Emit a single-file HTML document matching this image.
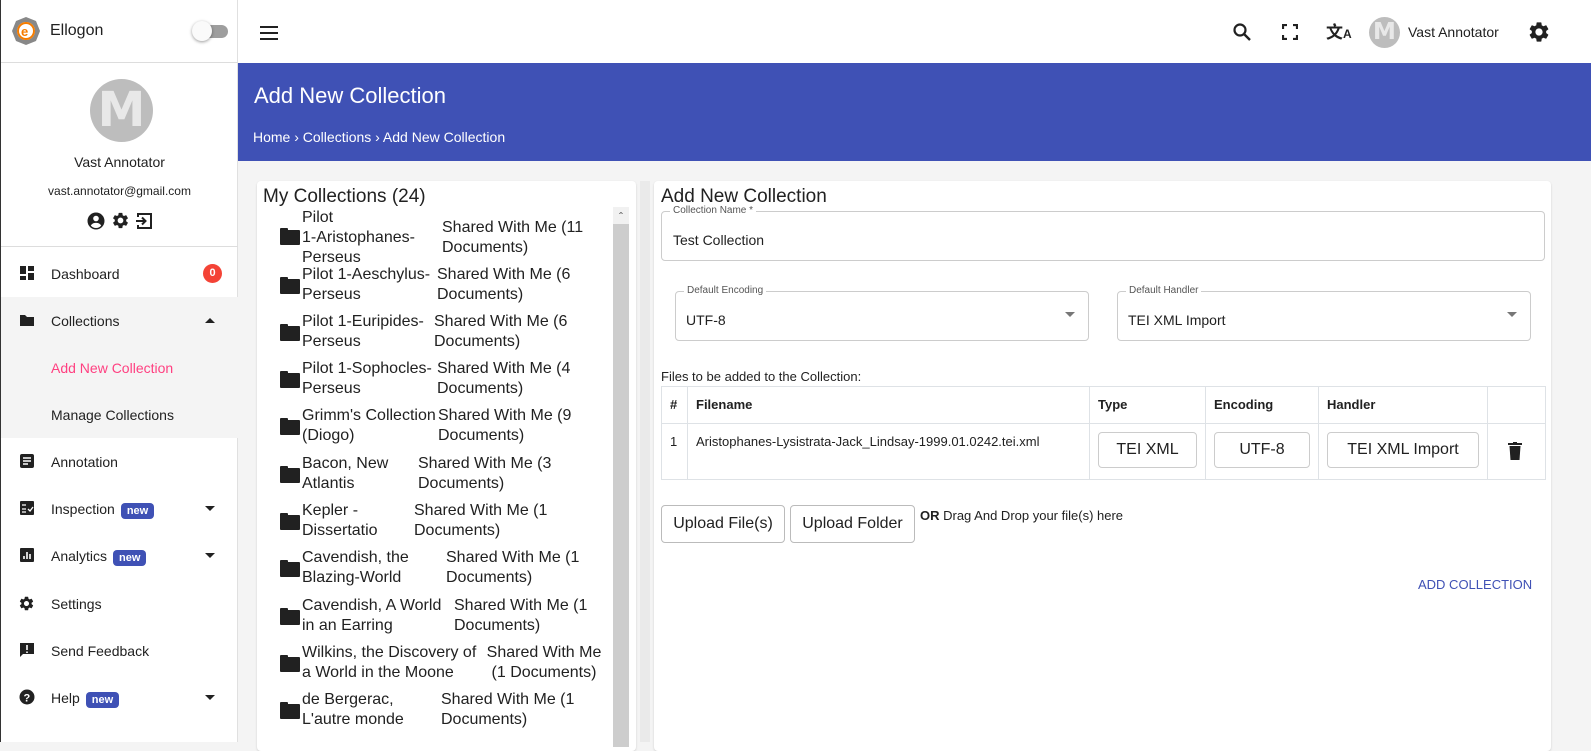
<!DOCTYPE html>
<html><head><meta charset="utf-8"><style>
*{box-sizing:border-box;margin:0;padding:0}
body{width:1591px;height:742px;overflow:hidden;background:#f4f4f4;font-family:"Liberation Sans",sans-serif;color:#212121;position:relative}
.a{position:absolute}
.side{left:0;top:0;width:238px;height:742px;background:#fff;border-right:1px solid #e0e0e0;border-left:1px solid #333}
.nav{position:absolute;left:0;width:237px;height:47px;font-size:14px;display:flex;align-items:center}
.nav .ic{position:absolute;left:18px;top:15px;width:16px;height:16px}
.nav .t{position:absolute;left:50px}
.badge{background:#3f51b5;color:#fff;font-size:11px;font-weight:bold;border-radius:4px;padding:2px 6px;margin-left:6px}
.caret{position:absolute;left:204px;width:0;height:0;border-left:5px solid transparent;border-right:5px solid transparent;border-top:5px solid #212121}
.card{background:#fff;border-radius:4px;box-shadow:0 1px 2px rgba(0,0,0,.15)}
.row{position:absolute;left:280px;font-size:16px;line-height:20px;color:#212121}
.fold{position:absolute;left:0;width:20px;height:15px;background:#212121;border-radius:1px}
.fold:before{content:"";position:absolute;left:0;top:-2px;width:8px;height:3px;background:#212121;border-radius:1px 1px 0 0}
.fs{position:absolute;border:1px solid #ccc;border-radius:4px}
.lbl{position:absolute;top:-7px;left:8px;background:#fff;font-size:10px;color:#555;padding:0 3px}
td,th{border:1px solid #dee2e6;font-size:13px;text-align:left;vertical-align:top}
.inb{border:1px solid #ccc;border-radius:4px;display:inline-block;height:36px;line-height:34px;font-size:16px;text-align:center}
.btn{position:absolute;border:1px solid #bbb;border-radius:4px;background:#fff;height:38px;line-height:36px;font-size:16px;text-align:center}
.av{border-radius:50%;background:#bdbdbd;color:#e8e8e8;font-weight:bold;text-align:center;font-family:"DejaVu Sans",sans-serif}
</style></head><body>
<svg width="0" height="0" style="position:absolute"><defs><path id="gear" d="M19.14 12.94c.04-.3.06-.61.06-.94 0-.32-.02-.64-.07-.94l2.03-1.58c.18-.14.23-.41.12-.61l-1.92-3.32c-.12-.22-.37-.29-.59-.22l-2.39.96c-.5-.38-1.030-.7-1.62-.94l-.36-2.54c-.04-.24-.24-.41-.48-.41h-3.84c-.24 0-.43.17-.47.41l-.36 2.54c-.59.24-1.13.57-1.62.94l-2.39-.96c-.22-.08-.47 0-.59.22L2.74 8.87c-.12.21-.08.47.12.61l2.03 1.58c-.05.3-.09.63-.09.94s.02.64.07.94l-2.03 1.58c-.18.14-.23.41-.12.61l1.92 3.32c.12.22.37.29.59.22l2.39-.96c.5.38 1.03.7 1.62.94l.36 2.54c.05.24.24.41.48.41h3.84c.24 0 .44-.17.47-.41l.36-2.54c.59-.24 1.13-.56 1.62-.94l2.39.96c.22.08.47 0 .59-.22l1.920-3.32c.12-.22.07-.47-.12-.61l-2.01-1.58zM12 15.6c-1.98 0-3.6-1.62-3.6-3.6s1.62-3.6 3.6-3.6 3.6 1.62 3.6 3.6-1.62 3.6-3.6 3.6z"/></defs></svg>
<!-- sidebar -->
<div class="a side">
 <svg class="a" style="left:10px;top:16px" width="30" height="30" viewBox="0 0 30 30"><polygon points="15,1 25,5 29,15 25,25 15,29 5,25 1,15 5,5" fill="#888"/><circle cx="15" cy="15" r="9" fill="#fff"/><circle cx="15" cy="15" r="8" fill="none" stroke="#f57c00" stroke-width="2"/><text x="10" y="20" font-size="13" font-weight="bold" fill="#f57c00" font-family="Liberation Sans">e</text></svg>
 <div class="a" style="left:49px;top:22px;font-size:16px">Ellogon</div>
 <div class="a" style="left:195px;top:25px;width:32px;height:13px;border-radius:7px;background:#9e9e9e"></div>
 <div class="a" style="left:191px;top:21px;width:20px;height:20px;border-radius:50%;background:#fafafa;box-shadow:0 1px 3px rgba(0,0,0,.4)"></div>
 <div class="a" style="left:0;top:62px;width:237px;height:1px;background:#ddd"></div>
 <div class="a av" style="left:89px;top:79px;width:63px;height:63px;font-size:48px;line-height:63px">M</div>
 <div class="a" style="left:0;width:237px;top:154px;text-align:center;font-size:14px">Vast Annotator</div>
 <div class="a" style="left:0;width:237px;top:184px;text-align:center;font-size:12px">vast.annotator@gmail.com</div>
 <svg class="a" style="left:86px;top:212px" width="18" height="18" viewBox="0 0 18 18"><circle cx="9" cy="9" r="8.5" fill="#212121"/><circle cx="9" cy="6.5" r="2.8" fill="#fff"/><path d="M3.8 13.5c1.5-2 3-2.6 5.2-2.6s3.7.6 5.2 2.6c-1.3 1.6-3.1 2.5-5.2 2.5s-3.9-.9-5.2-2.5z" fill="#fff"/></svg>
 <svg class="a" style="left:110px;top:211px" width="19" height="19" viewBox="0 0 24 24"><use href="#gear" fill="#212121"/></svg>
 <svg class="a" style="left:134px;top:212px" width="18" height="18" viewBox="0 0 18 18"><path d="M3 5V2h13v14H3v-3" stroke="#212121" stroke-width="2" fill="none"/><path d="M1 9h9M7 5.5L10.5 9 7 12.5" stroke="#212121" stroke-width="2" fill="none"/></svg>
 <div class="a" style="left:0;top:246px;width:237px;height:1px;background:#ddd"></div>
 <div class="nav" style="top:250px"><svg class="ic" viewBox="0 0 16 16"><rect x="1" y="1" width="6" height="8" fill="#212121"/><rect x="9" y="1" width="6" height="5" fill="#212121"/><rect x="1" y="11" width="6" height="4" fill="#212121"/><rect x="9" y="8" width="6" height="7" fill="#212121"/></svg><span class="t">Dashboard</span><span class="a" style="left:202px;top:14px;width:19px;height:19px;border-radius:50%;background:#f44336;color:#fff;font-size:11px;font-weight:bold;text-align:center;line-height:19px">0</span></div>
 <div class="a" style="left:0;top:297px;width:237px;height:141px;background:#f4f4f4"></div>
 <div class="nav" style="top:297px"><svg class="ic" viewBox="0 0 16 16"><path d="M1 3h5l2 2h7v9H1z" fill="#212121"/></svg><span class="t">Collections</span><span class="caret" style="border-top:none;border-bottom:5px solid #212121;top:21px"></span></div>
 <div class="nav" style="top:344px"><span class="t" style="color:#ff4081">Add New Collection</span></div>
 <div class="nav" style="top:391px"><span class="t">Manage Collections</span></div>
 <div class="nav" style="top:438px"><svg class="ic" viewBox="0 0 16 16"><rect x="1" y="1" width="14" height="14" rx="2" fill="#212121"/><path d="M4 5h8M4 8h8M4 11h5" stroke="#fff" stroke-width="1.5"/></svg><span class="t">Annotation</span></div>
 <div class="nav" style="top:485px"><svg class="ic" viewBox="0 0 16 16"><rect x="1" y="1" width="14" height="14" rx="1" fill="#212121"/><path d="M3 5h4M3 9h4M3 12h4M9 9l2 2 3-4" stroke="#fff" stroke-width="1.3" fill="none"/></svg><span class="t">Inspection<span class="badge">new</span></span><span class="caret" style="top:21px"></span></div>
 <div class="nav" style="top:532px"><svg class="ic" viewBox="0 0 16 16"><rect x="1" y="1" width="14" height="14" rx="1" fill="#212121"/><path d="M5 12V9M8 12V5M11 12V7" stroke="#fff" stroke-width="1.6"/></svg><span class="t">Analytics<span class="badge">new</span></span><span class="caret" style="top:21px"></span></div>
 <div class="nav" style="top:580px"><svg class="ic" viewBox="0 0 24 24" style="width:17px;height:17px;left:17px"><use href="#gear" fill="#212121"/></svg><span class="t">Settings</span></div>
 <div class="nav" style="top:627px"><svg class="ic" viewBox="0 0 16 16"><path d="M1 1h14v11H4l-3 3z" fill="#212121"/><path d="M8 3v5M8 9.5v1.5" stroke="#fff" stroke-width="1.6"/></svg><span class="t">Send Feedback</span></div>
 <div class="nav" style="top:674px"><svg class="ic" viewBox="0 0 16 16"><circle cx="8" cy="8" r="7.5" fill="#212121"/><text x="4.5" y="12.5" font-size="11" font-weight="bold" fill="#fff" font-family="Liberation Sans">?</text></svg><span class="t">Help<span class="badge">new</span></span><span class="caret" style="top:21px"></span></div>
</div>
<!-- topbar -->
<div class="a" style="left:238px;top:0;width:1353px;height:63px;background:#fff"></div>
<div class="a" style="left:260px;top:26px;width:18px;height:2px;background:#212121;box-shadow:0 6px 0 #212121,0 12px 0 #212121;top:26px"></div>
<svg class="a" style="left:1232px;top:22px" width="20" height="20" viewBox="0 0 20 20"><circle cx="8" cy="8" r="5.5" stroke="#212121" stroke-width="2.2" fill="none"/><path d="M12 12l6 6" stroke="#212121" stroke-width="2.4"/></svg>
<svg class="a" style="left:1282px;top:24px" width="16" height="16" viewBox="0 0 16 16"><path d="M1 5V1h4M11 1h4v4M15 11v4h-4M5 15H1v-4" stroke="#212121" stroke-width="2.2" fill="none"/></svg>
<div class="a" style="left:1326px;top:20px;font-size:17px;font-weight:bold;font-family:'Noto Sans CJK SC',sans-serif;line-height:22px">文<span style="font-size:12px;font-family:'Liberation Sans'">A</span></div>
<div class="a av" style="left:1369px;top:17px;width:31px;height:31px;font-size:23px;line-height:31px">M</div>
<div class="a" style="left:1408px;top:24px;font-size:14px">Vast Annotator</div>
<svg class="a" style="left:1527px;top:20px" width="24" height="24" viewBox="0 0 24 24"><use href="#gear" fill="#212121"/></svg>
<!-- header -->
<div class="a" style="left:238px;top:63px;width:1353px;height:98px;background:#3f51b5"></div>
<div class="a" style="left:254px;top:83px;font-size:22px;color:#fff">Add New Collection</div>
<div class="a" style="left:253px;top:129px;font-size:14px;color:#fff">Home &#8250; Collections &#8250; Add New Collection</div>
<!-- left card -->
<div class="a card" style="left:257px;top:181px;width:379px;height:570px"></div>
<div class="a" style="left:263px;top:186px;font-size:19px">My Collections (24)</div>
<div class="a" style="left:613px;top:207px;width:16px;height:540px;background:#cdcdcd"></div>
<div class="a" style="left:613px;top:207px;width:16px;height:17px;background:#f1f1f1;font-size:12px;text-align:center;line-height:20px;color:#555">&#710;</div>
<div class="a" style="left:640px;top:181px;width:10px;height:561px;background:#eaeaea"></div>
<div class="row" style="top:208px"><span class="fold" style="top:22px"></span><span class="a" style="left:22px;width:140px">Pilot<br>1-Aristophanes-<br>Perseus</span><span class="a" style="left:162px;top:10px;width:160px">Shared With Me (11<br>Documents)</span></div>
<div class="row" style="top:265px"><span class="fold" style="top:14px"></span><span class="a" style="left:22px;width:140px">Pilot 1-Aeschylus-<br>Perseus</span><span class="a" style="left:157px;width:160px">Shared With Me (6<br>Documents)</span></div>
<div class="row" style="top:312px"><span class="fold" style="top:14px"></span><span class="a" style="left:22px;width:140px">Pilot 1-Euripides-<br>Perseus</span><span class="a" style="left:154px;width:160px">Shared With Me (6<br>Documents)</span></div>
<div class="row" style="top:359px"><span class="fold" style="top:14px"></span><span class="a" style="left:22px;width:140px">Pilot 1-Sophocles-<br>Perseus</span><span class="a" style="left:157px;width:160px">Shared With Me (4<br>Documents)</span></div>
<div class="row" style="top:406px"><span class="fold" style="top:14px"></span><span class="a" style="left:22px;width:140px">Grimm's Collection<br>(Diogo)</span><span class="a" style="left:158px;width:160px">Shared With Me (9<br>Documents)</span></div>
<div class="row" style="top:454px"><span class="fold" style="top:14px"></span><span class="a" style="left:22px;width:140px">Bacon, New<br>Atlantis</span><span class="a" style="left:138px;width:160px">Shared With Me (3<br>Documents)</span></div>
<div class="row" style="top:501px"><span class="fold" style="top:14px"></span><span class="a" style="left:22px;width:140px">Kepler -<br>Dissertatio</span><span class="a" style="left:134px;width:160px">Shared With Me (1<br>Documents)</span></div>
<div class="row" style="top:548px"><span class="fold" style="top:14px"></span><span class="a" style="left:22px;width:140px">Cavendish, the<br>Blazing-World</span><span class="a" style="left:166px;width:160px">Shared With Me (1<br>Documents)</span></div>
<div class="row" style="top:596px"><span class="fold" style="top:14px"></span><span class="a" style="left:22px;width:160px">Cavendish, A World<br>in an Earring</span><span class="a" style="left:174px;width:160px">Shared With Me (1<br>Documents)</span></div>
<div class="row" style="top:643px"><span class="fold" style="top:14px"></span><span class="a" style="left:22px;width:180px">Wilkins, the Discovery of<br>a World in the Moone</span><span class="a" style="left:199px;width:130px;text-align:center">Shared With Me<br>(1 Documents)</span></div>
<div class="row" style="top:690px"><span class="fold" style="top:14px"></span><span class="a" style="left:22px;width:140px">de Bergerac,<br>L'autre monde</span><span class="a" style="left:161px;width:160px">Shared With Me (1<br>Documents)</span></div>
<!-- right card -->
<div class="a card" style="left:654px;top:181px;width:897px;height:570px"></div>
<div class="a" style="left:661px;top:186px;font-size:19px">Add New Collection</div>
<div class="fs" style="left:661px;top:211px;width:884px;height:50px"><span class="lbl">Collection Name *</span><span class="a" style="left:11px;top:20px;font-size:14px">Test Collection</span></div>
<div class="fs" style="left:675px;top:291px;width:414px;height:50px"><span class="lbl">Default Encoding</span><span class="a" style="left:10px;top:20px;font-size:14px">UTF-8</span><span class="caret" style="left:389px;top:20px;border-top-color:#777"></span></div>
<div class="fs" style="left:1117px;top:291px;width:414px;height:50px"><span class="lbl">Default Handler</span><span class="a" style="left:10px;top:20px;font-size:14px">TEI XML Import</span><span class="caret" style="left:389px;top:20px;border-top-color:#777"></span></div>
<div class="a" style="left:661px;top:369px;font-size:13px">Files to be added to the Collection:</div>
<table class="a" style="left:661px;top:386px;width:885px;border-collapse:collapse">
<tr style="height:37px"><th style="width:26px;padding:10px 8px">#</th><th style="width:402px;padding:10px 8px">Filename</th><th style="width:115px;padding:10px 8px">Type</th><th style="width:113px;padding:10px 8px">Encoding</th><th style="width:169px;padding:10px 8px">Handler</th><th></th></tr>
<tr style="height:56px"><td style="padding:10px 8px">1</td><td style="padding:10px 8px">Aristophanes-Lysistrata-Jack_Lindsay-1999.01.0242.tei.xml</td><td style="padding:8px"><span class="inb" style="width:99px">TEI XML</span></td><td style="padding:8px"><span class="inb" style="width:96px">UTF-8</span></td><td style="padding:8px"><span class="inb" style="width:152px">TEI XML Import</span></td><td style="padding:18px 0 0 20px"><svg width="14" height="18" viewBox="0 0 14 18"><rect x="0" y="1" width="14" height="2" fill="#212121"/><rect x="5" y="0" width="4" height="2" fill="#212121"/><path d="M1.5 4h11l-1 14h-9z" fill="#212121"/></svg></td></tr>
</table>
<div class="btn" style="left:661px;top:505px;width:124px">Upload File(s)</div>
<div class="btn" style="left:790px;top:505px;width:125px">Upload Folder</div>
<div class="a" style="left:920px;top:508px;font-size:13px"><b>OR</b> Drag And Drop your file(s) here</div>
<div class="a" style="left:1418px;top:577px;font-size:13px;color:#3f51b5">ADD COLLECTION</div>
</body></html>
